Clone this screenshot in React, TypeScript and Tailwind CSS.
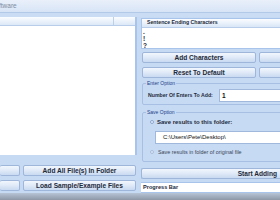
import React from "react";

const btn =
  "flex items-center justify-center whitespace-nowrap border border-[#9db6da] rounded-[2px] bg-gradient-to-b from-[#f2f7fd] via-[#dfe9f7] to-[#c9daf1] text-[6.6px] font-bold text-[#1e2a3a]";

export default function App() {
  return (
    <div
      className="w-[280px] h-[200px] overflow-hidden bg-[#c7daf3] flex flex-col"
      style={{ fontFamily: '"Liberation Sans", Arial, sans-serif' }}
    >
      {/* title bar */}
      <div className="h-[13px] shrink-0 bg-gradient-to-b from-[#e9f0fa] to-[#d7e4f6] border-b border-[#b3c9e8] flex items-center">
        <span className="text-[6.5px] text-[#7f8c9e] ml-[-1px] leading-none">ftware</span>
      </div>
      <div className="h-[4px] shrink-0 bg-[#cadcf4]" />

      {/* main */}
      <div className="flex flex-1 min-h-0">
        {/* left column */}
        <div className="w-[137px] shrink-0 flex flex-col">
          <div className="h-[138px] bg-white border-r-[2px] border-[#a9c4ea] flex flex-col">
            <div className="h-[9px] bg-gradient-to-b from-[#fbfdff] to-[#dde8f7] border-b border-[#b8cde9] flex">
              <div className="w-[114px] border-r border-[#bdd0ea]" />
            </div>
          </div>
          <div className="mt-[10px] flex gap-[3px] h-[11px]">
            <div className={btn + " w-[20px] border-l-0"} />
            <div className={btn + " flex-1 mr-[1px]"}>Add All File(s) In Folder</div>
          </div>
          <div className="mt-[4px] flex gap-[3px] h-[11px]">
            <div className={btn + " w-[20px] border-l-0"} />
            <div className={btn + " flex-1 mr-[1px] text-[6.2px]"}>Load Sample/Example Files</div>
          </div>
        </div>

        {/* right column */}
        <div className="ml-[4px] flex-1 min-w-0 overflow-hidden flex flex-col">
          <div className="mt-[1px] h-[31px] w-[160px] shrink-0 bg-white border border-[#a9c4ea] flex flex-col">
            <div className="h-[9px] shrink-0 bg-gradient-to-b from-[#fbfdff] to-[#d9e6f7] border-b border-[#b8cde9] flex items-center pl-[5px] text-[5.2px] font-bold text-[#1e2a3a] whitespace-nowrap">
              Sentence Ending Characters
            </div>
            <div className="pl-[1px] text-[6.5px] font-bold leading-[7px] text-[#1e2a3a]">
              <div>.</div>
              <div>!</div>
              <div>?</div>
            </div>
          </div>

          <div className="mt-[3px] flex gap-[3px] h-[11px] shrink-0 pl-[1px]">
            <div className={btn + " w-[114px] shrink-0"}>Add Characters</div>
            <div className={btn + " w-[40px] shrink-0"} />
          </div>
          <div className="mt-[4px] flex gap-[3px] h-[11px] shrink-0 pl-[1px]">
            <div className={btn + " w-[114px] shrink-0"}>Reset To Default</div>
            <div className={btn + " w-[40px] shrink-0"} />
          </div>

          {/* Enter option */}
          <div className="relative mt-[5px] ml-[1px] w-[160px] h-[22px] shrink-0 border border-[#a6bfe3] rounded-[2px] flex items-center pl-[5px]">
            <span className="absolute left-[3px] top-[-4px] bg-[#c7daf3] px-[1px] text-[5px] leading-[7px] text-[#1c3f8a] whitespace-nowrap">
              Enter Option
            </span>
            <span className="w-[71px] shrink-0 text-[5.2px] font-bold text-[#1e2a3a] mt-[3px] whitespace-nowrap">
              Number Of Enters To Add:
            </span>
            <div className="mt-[3px] w-[80px] h-[13px] shrink-0 bg-white border border-[#9fb8dc] text-[6.5px] font-bold leading-[11px] pl-[2px] text-[#111]">
              1
            </div>
          </div>

          {/* Save option */}
          <div className="relative mt-[7px] ml-[1px] w-[160px] h-[50px] shrink-0 border border-[#a6bfe3] rounded-[2px] flex flex-col">
            <span className="absolute left-[3px] top-[-4px] bg-[#c7daf3] px-[1px] text-[5px] leading-[7px] text-[#1c3f8a] whitespace-nowrap">
              Save Option
            </span>
            <div className="flex items-center mt-[5px] ml-[7px] h-[8px] whitespace-nowrap">
              <div className="w-[4px] h-[4px] shrink-0 rounded-full border border-[#8aa6cf] bg-[#e8f0fb]" />
              <span className="ml-[3px] text-[6px] font-bold text-[#1e2a3a]">Save results to this folder:</span>
            </div>
            <div className="ml-[12px] mt-[5px] h-[13px] w-[140px] shrink-0 bg-white border border-[#9fb8dc] flex items-center pl-[7px] text-[6px] text-[#111] whitespace-nowrap">
              C:\Users\Pete\Desktop\
            </div>
            <div className="flex items-center mt-[4px] ml-[7px] h-[8px] whitespace-nowrap">
              <div className="w-[4px] h-[4px] shrink-0 rounded-full border border-[#a9bddb] bg-[#dce7f6]" />
              <span className="ml-[4px] text-[5.4px] text-[#3a4658]">
                Save results in folder of original file
              </span>
            </div>
          </div>

          <div className={btn + " mt-[6px] h-[11px] w-[160px] shrink-0 justify-end pr-[24px] border-r-0 text-[6.3px]"}>
            Start Adding
          </div>
          <div className="mt-[3px] h-[11px] w-[160px] shrink-0 ml-[-1px] bg-white border border-[#a9c4ea] flex items-center pl-[2px] text-[5.6px] font-bold text-[#1e2a3a] whitespace-nowrap">
            Progress Bar
          </div>
        </div>
      </div>

      {/* bottom */}
      <div className="h-[7px] shrink-0 bg-gradient-to-b from-[#b7c4d6] to-[#8d97a6]" />
    </div>
  );
}
